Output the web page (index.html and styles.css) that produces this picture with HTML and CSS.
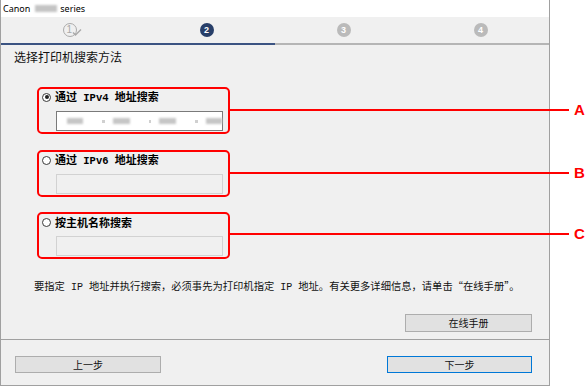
FILE: index.html
```html
<!DOCTYPE html>
<html lang="zh">
<head>
<meta charset="utf-8">
<title>Canon series</title>
<link rel="stylesheet" href="styles.css">
</head>
<body>
<div class="window">
  <div class="titlebar">
    <span>Canon</span><span class="blur-name"></span><span>series</span>
  </div>
  <div class="steps">
    <div class="step">
      <span class="badge done">1</span>
      <svg class="check" width="10" height="8" viewBox="0 0 10 8"><path d="M1 4.5 L3.5 7 L9 1.5" fill="none" stroke="#a9a9a9" stroke-width="1.4"/></svg>
    </div>
    <div class="step"><span class="badge current">2</span></div>
    <div class="step"><span class="badge todo">3</span></div>
    <div class="step"><span class="badge todo">4</span></div>
  </div>
  <div class="progress"><div class="progress-fill"></div></div>

  <div class="content">
    <h1 class="heading">选择打印机搜索方法</h1>

    <div class="options">
      <div class="option option-a">
        <div class="opt-label"><span class="radio checked"></span><span>通过<span class="mono"> IPv4 </span>地址搜索</span></div>
        <div class="field active">
          <span class="blk"></span><span class="dot"></span><span class="blk"></span><span class="dot"></span><span class="blk"></span><span class="dot"></span><span class="blk"></span>
        </div>
        <span class="callout-line"></span><span class="callout-letter">A</span>
      </div>
      <div class="option option-b">
        <div class="opt-label"><span class="radio"></span><span>通过<span class="mono"> IPv6 </span>地址搜索</span></div>
        <div class="field"></div>
        <span class="callout-line"></span><span class="callout-letter">B</span>
      </div>
      <div class="option option-c">
        <div class="opt-label"><span class="radio"></span><span>按主机名称搜索</span></div>
        <div class="field"></div>
        <span class="callout-line"></span><span class="callout-letter">C</span>
      </div>
    </div>

    <p class="note">要指定<span class="mono"> IP </span>地址并执行搜索，必须事先为打印机指定<span class="mono"> IP </span>地址。有关更多详细信息，请单击“在线手册”。</p>

    <div class="manual-row"><button class="btn btn-manual">在线手册</button></div>
  </div>

  <div class="footer">
    <button class="btn btn-back">上一步</button>
    <button class="btn btn-next">下一步</button>
  </div>
</div>
</body>
</html>
```
FILE: styles.css
```css
* { box-sizing: border-box; }
html, body { margin: 0; padding: 0; background: #ffffff; }
body {
  width: 587px;
  height: 387px;
  overflow: hidden;
  font-family: "Noto Sans CJK SC", "Noto Sans", sans-serif;
  color: #000;
}

.window {
  width: 550px;
  height: 386px;
  background: #f0f0f0;
  border-left: 1px solid #a0a0a0;
  border-right: 1px solid #a0a0a0;
  border-bottom: 1px solid #a0a0a0;
  display: flex;
  flex-direction: column;
}

.titlebar {
  height: 17px;
  background: #ffffff;
  display: flex;
  align-items: center;
  padding-left: 2px;
  font-family: "Noto Sans", sans-serif;
  font-size: 9px;
  line-height: 17px;
  color: #000;
}
.blur-name {
  display: inline-block;
  width: 22px;
  height: 7px;
  margin: 0 3px 0 5px;
  background: #c4c4c4;
  filter: blur(1px);
}

.steps {
  height: 26px;
  display: grid;
  grid-template-columns: repeat(4, 1fr);
  align-items: center;
  background: #f0f0f0;
}
.step {
  display: flex;
  justify-content: center;
  align-items: center;
  position: relative;
}
.badge {
  width: 14px;
  height: 14px;
  border-radius: 50%;
  display: flex;
  align-items: center;
  justify-content: center;
  font-family: "Liberation Sans", sans-serif;
  font-weight: 700;
  font-size: 9px;
  line-height: 1;
  color: #fff;
}
.badge.current { background: #283f69; }
.badge.todo { background: #bababa; }
.badge.done {
  background: transparent;
  border: 1.3px solid #ababab;
  color: #a9a9a9;
  font-weight: 400;
  font-size: 10px;
  justify-content: flex-start;
  padding-left: 3px;
}
.check {
  position: absolute;
  left: 50%;
  top: 5px;
  margin-left: 2px;
}

.progress {
  height: 2px;
  background: #b5b5b5;
}
.progress-fill {
  width: 50%;
  height: 2px;
  background: #3b5382;
}

.content {
  padding: 4px 17px 7px 13px;
  display: flex;
  flex-direction: column;
}
.heading {
  margin: 0;
  font-size: 12px;
  line-height: 16px;
  font-weight: 400;
  color: #111;
}

.options {
  margin-top: 22px;
  margin-left: 23px;
  display: flex;
  flex-direction: column;
}
.option {
  position: relative;
  width: 193px;
  height: 47px;
  border: 2px solid #ff0000;
  border-radius: 5px;
  padding: 0 0 1px 3px;
}
.option-b { margin-top: 16px; }
.option-c { margin-top: 15px; }

.opt-label {
  height: 16px;
  display: flex;
  align-items: center;
  gap: 4px;
  font-size: 11px;
  font-weight: 700;
  line-height: 16px;
  white-space: pre;
}
.mono {
  font-family: "Liberation Mono", monospace;
  white-space: pre;
}
.opt-label .mono { font-weight: 700; font-size: 10.5px; }
.radio {
  width: 9px;
  height: 9px;
  border: 1px solid #3a3a3a;
  border-radius: 50%;
  background: #fff;
  display: flex;
  align-items: center;
  justify-content: center;
  flex: none;
}
.radio.checked::after {
  content: "";
  width: 4px;
  height: 4px;
  border-radius: 50%;
  background: #222;
}

.field {
  margin-top: 6px;
  margin-left: 14px;
  width: 167px;
  height: 20px;
  border: 1px solid #d2d2d2;
  background: #f0f0f0;
}
.field.active {
  border-color: #7a7a7a;
  background: #ffffff;
  display: flex;
  align-items: center;
  padding-left: 10px;
}
.blk {
  width: 17px;
  height: 6px;
  background: #c6c6c6;
  filter: blur(1px);
}
.dot {
  width: 3px;
  height: 3px;
  background: #d0d0d0;
  margin: 1px 8px 0 19px;
  filter: blur(0.5px);
}

.callout-line {
  position: absolute;
  left: 189px;
  top: 20px;
  width: 341px;
  height: 2px;
  background: #ff0000;
}
.option-c .callout-line { top: 19px; }
.callout-letter {
  position: absolute;
  left: 535px;
  top: 12px;
  font-family: "Liberation Sans", sans-serif;
  font-weight: 700;
  font-size: 15px;
  line-height: 18px;
  color: #ff0000;
}
.option-c .callout-letter { top: 11px; }

.note {
  margin: 20px 0 0 20px;
  font-size: 10.3px;
  line-height: 13px;
  color: #111;
  white-space: nowrap;
}
.note .mono { font-size: 10px; }

.manual-row {
  margin-top: 20px;
  display: flex;
  justify-content: flex-end;
}

.btn {
  font-family: "Noto Sans CJK SC", sans-serif;
  font-size: 10px;
  line-height: 1;
  color: #111;
  background: #e1e1e1;
  border: 1px solid #adadad;
  border-radius: 0;
  padding: 0;
  margin: 0;
  display: flex;
  align-items: center;
  justify-content: center;
}
.btn-manual { width: 127px; height: 18px; }

.footer {
  flex: 1;
  border-top: 1px solid #a0a0a0;
  padding: 16px 17px 0 14px;
  display: flex;
  justify-content: space-between;
  align-items: flex-start;
}
.btn-back { width: 146px; height: 17px; }
.btn-next { width: 145px; height: 17px; border-color: #0078d7; }
```
